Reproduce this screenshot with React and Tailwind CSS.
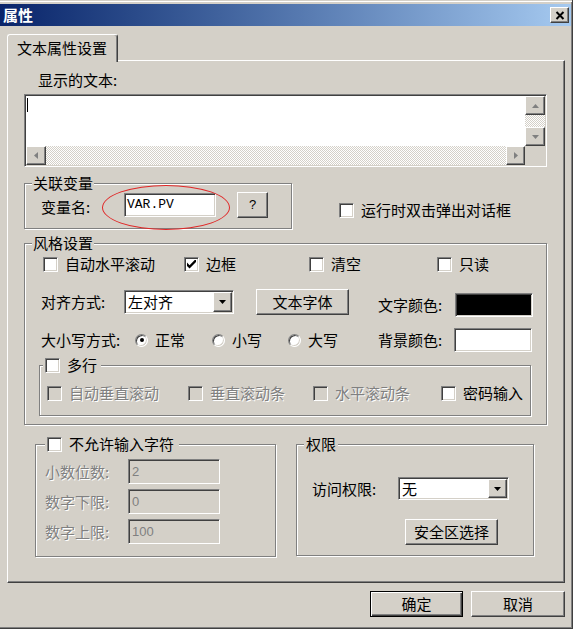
import React from "react";

const raised =
  "border border-t-white border-l-white border-r-[#404040] border-b-[#404040] shadow-[inset_-1px_-1px_0_#808080]";
const sunken =
  "border border-t-[#808080] border-l-[#808080] border-r-white border-b-white shadow-[inset_1px_1px_0_#404040,inset_-1px_-1px_0_#d4d0c8]";
const etched =
  "border border-[#808080] shadow-[1px_1px_0_#ffffff,inset_1px_1px_0_#ffffff]";
const disabledText = "text-[#808080] [text-shadow:1px_1px_0_#ffffff]";
const dither =
  "bg-[repeating-conic-gradient(#ffffff_0%_25%,#d4d0c8_0%_50%)] bg-size-[2px_2px]";

function Check({ checked = false, disabled = false }) {
  return (
    <span
      className={`${sunken} ${
        disabled ? "bg-[#d4d0c8]" : "bg-white"
      } flex h-[15px] w-[15px] shrink-0 items-center justify-center`}
    >
      {checked && (
        <svg width="9" height="9" viewBox="0 0 7 7">
          <polygon points="0,2 2,4 7,-1 7,1.6 2,6.6 0,4.6" fill="#000" />
        </svg>
      )}
    </span>
  );
}

function CheckItem({ label, checked, disabled, className = "" }) {
  return (
    <div className={`flex items-center gap-[7px] ${className}`}>
      <Check checked={checked} disabled={disabled} />
      <span className={disabled ? disabledText : ""}>{label}</span>
    </div>
  );
}

function Radio({ checked = false, label, className = "" }) {
  return (
    <div className={`flex items-center gap-[7px] ${className}`}>
      <span className="flex h-[13px] w-[13px] shrink-0 items-center justify-center rounded-full border border-t-[#808080] border-l-[#808080] border-r-white border-b-white bg-white shadow-[inset_1px_1px_0_#404040,inset_-1px_-1px_0_#d4d0c8]">
        {checked && <span className="h-[4px] w-[4px] rounded-full bg-black" />}
      </span>
      <span>{label}</span>
    </div>
  );
}

function Arrow({ dir, color = "#808080" }) {
  const paths = {
    up: "M0 4 L3.5 0 L7 4 Z",
    down: "M0 0 L7 0 L3.5 4 Z",
  };
  if (dir === "left" || dir === "right") {
    return (
      <svg width="4" height="7" viewBox="0 0 4 7">
        <path d={dir === "left" ? "M4 0 L0 3.5 L4 7 Z" : "M0 0 L4 3.5 L0 7 Z"} fill={color} />
      </svg>
    );
  }
  return (
    <svg width="7" height="4" viewBox="0 0 7 4">
      <path d={paths[dir]} fill={color} />
    </svg>
  );
}

function Select({ value, w, h }) {
  return (
    <div className={`${sunken} flex bg-white p-[1px] ${w} ${h}`}>
      <span className="flex flex-1 items-center pl-[2px]">{value}</span>
      <span className={`${raised} flex w-[19px] items-center justify-center bg-[#d4d0c8]`}>
        <Arrow dir="down" color="#000" />
      </span>
    </div>
  );
}

function Button({ children, className = "", isDefault = false }) {
  if (isDefault) {
    return (
      <div
        className={`flex items-center justify-center border border-black bg-[#d4d0c8] shadow-[inset_1px_1px_0_#ffffff,inset_-1px_-1px_0_#404040,inset_-2px_-2px_0_#808080] ${className}`}
      >
        {children}
      </div>
    );
  }
  return (
    <div className={`${raised} flex items-center justify-center bg-[#d4d0c8] ${className}`}>
      {children}
    </div>
  );
}

export default function App() {
  return (
    <div className="h-[632px] w-[577px] overflow-hidden bg-white font-['Noto_Sans_CJK_SC','Noto_Sans',sans-serif] text-[15px] leading-[16px] text-black">
      <div className="flex h-[629px] w-[573px] flex-col border-r border-b border-r-[#404040] border-b-[#404040] bg-[#d4d0c8] pt-[4px] pr-[1px] shadow-[inset_0_1px_0_#d4d0c8,inset_0_2px_0_#ffffff,inset_-1px_-1px_0_#808080]">
        {/* Title bar */}
        <div className="flex h-[22px] items-center justify-between bg-linear-to-r from-[#0a246a] to-[#a6caf0] pr-[2px] pl-[3px]">
          <span className="font-bold text-white">属性</span>
          <div className={`${raised} flex h-[16px] w-[19px] items-center justify-center bg-[#d4d0c8]`}>
            <svg width="10" height="9" viewBox="0 0 10 9">
              <path d="M1.5 1 L8.5 8 M8.5 1 L1.5 8" stroke="#000" strokeWidth="2" />
            </svg>
          </div>
        </div>

        {/* Tab */}
        <div className="mt-[8px] flex flex-col items-start pl-[7px]">
          <div className="relative z-10 -mb-[2px] h-[28px] w-[111px] rounded-t-[3px] border-t border-l border-r border-t-white border-l-white border-r-[#404040] bg-[#d4d0c8] pt-[5px] pl-[9px] shadow-[inset_-1px_0_0_#808080]">
            文本属性设置
          </div>

          {/* Panel */}
          <div className="flex h-[523px] w-[558px] flex-col items-start border border-t-white border-l-white border-r-[#404040] border-b-[#404040] pt-[11px] pl-[16px] shadow-[inset_-1px_-1px_0_#808080]">
            <div className="ml-[14px]">显示的文本:</div>

            {/* Textarea */}
            <div className={`${sunken} mt-[6px] grid h-[73px] w-[523px] grid-cols-[1fr_20px] grid-rows-[1fr_19px] bg-white p-[1px]`}>
              <div className="bg-white pt-[2px] pl-[1px]">
                <div className="h-[14px] w-px bg-black" />
              </div>
              <div className="flex flex-col">
                <div className={`${raised} flex h-[19px] items-center justify-center bg-[#d4d0c8]`}>
                  <Arrow dir="up" />
                </div>
                <div className={`h-[12px] ${dither}`} />
                <div className={`${raised} flex h-[19px] items-center justify-center bg-[#d4d0c8]`}>
                  <Arrow dir="down" />
                </div>
              </div>
              <div className="flex">
                <div className={`${raised} flex w-[20px] items-center justify-center bg-[#d4d0c8]`}>
                  <Arrow dir="left" />
                </div>
                <div className={`flex-1 ${dither}`} />
                <div className={`${raised} flex w-[19px] items-center justify-center bg-[#d4d0c8]`}>
                  <Arrow dir="right" />
                </div>
              </div>
              <div className="bg-[#d4d0c8]" />
            </div>

            {/* 关联变量 */}
            <div className="mt-[8px] flex items-start">
              <fieldset className={`${etched} h-[54px] w-[268px]`}>
                <legend className="ml-[7px] bg-[#d4d0c8] px-[1px]">关联变量</legend>
                <div className="mt-[2px] flex items-start pl-[16px]">
                  <span className="mt-[6px] w-[83px]">变量名:</span>
                  <div className="relative">
                    <div className={`${sunken} h-[24px] w-[92px] bg-white pt-[3px] pl-[2px] font-['Liberation_Mono',monospace] text-[13px]`}>
                      VAR.PV
                    </div>
                    <div className="pointer-events-none absolute -top-[8px] -left-[22px] h-[45px] w-[128px] rounded-[50%] border border-[#e02828]" />
                  </div>
                  <Button className="-mt-[1px] ml-[21px] h-[26px] w-[31px] font-['Liberation_Sans',sans-serif] text-[13px]">
                    ?
                  </Button>
                </div>
              </fieldset>
              <CheckItem className="mt-[27px] ml-[47px]" label="运行时双击弹出对话框" />
            </div>

            {/* 风格设置 */}
            <fieldset className={`${etched} mt-[6px] h-[190px] w-[523px]`}>
              <legend className="ml-[7px] bg-[#d4d0c8] px-[1px]">风格设置</legend>
              <div className="flex flex-col items-start pl-[14px]">
                <div className="mt-[5px] ml-[4px] flex h-[16px] items-center">
                  <CheckItem className="w-[141px]" label="自动水平滚动" />
                  <CheckItem className="w-[125px]" label="边框" checked />
                  <CheckItem className="w-[128px]" label="清空" />
                  <CheckItem label="只读" />
                </div>

                <div className="mt-[17px] ml-[2px] flex h-[26px] items-center">
                  <span className="w-[83px]">对齐方式:</span>
                  <Select value="左对齐" w="w-[110px]" h="h-[24px]" />
                  <Button className="ml-[22px] h-[26px] w-[93px]">文本字体</Button>
                  <span className="mt-[6px] ml-[29px] w-[77px]">文字颜色:</span>
                  <div className={`${sunken} mt-[6px] h-[24px] w-[78px] bg-black`} />
                </div>

                <div className="mt-[13px] ml-[2px] flex h-[24px] items-center">
                  <span className="w-[94px]">大小写方式:</span>
                  <Radio className="w-[77px]" label="正常" checked />
                  <Radio className="w-[76px]" label="小写" />
                  <Radio className="w-[90px]" label="大写" />
                  <span className="w-[76px]">背景颜色:</span>
                  <div className={`${sunken} h-[24px] w-[78px] bg-white`} />
                </div>

                <fieldset className={`${etched} mt-[5px] h-[59px] w-[492px]`}>
                  <legend className="ml-[3px] bg-[#d4d0c8] px-[2px]">
                    <span className="flex items-center gap-[7px] pr-[2px]">
                      <Check />
                      <span>多行</span>
                    </span>
                  </legend>
                  <div className="mt-[12px] flex h-[16px] items-center pl-[7px]">
                    <CheckItem className="w-[141px]" label="自动垂直滚动" disabled />
                    <CheckItem className="w-[125px]" label="垂直滚动条" disabled />
                    <CheckItem className="w-[128px]" label="水平滚动条" disabled />
                    <CheckItem label="密码输入" />
                  </div>
                </fieldset>
              </div>
            </fieldset>

            {/* Bottom groups */}
            <div className="mt-[11px] ml-[11px] flex items-start gap-[20px]">
              <fieldset className={`${etched} h-[121px] w-[241px]`}>
                <legend className="ml-[9px] bg-[#d4d0c8] px-[2px]">
                  <span className="flex items-center gap-[7px] pr-[3px]">
                    <Check />
                    <span>不允许输入字符</span>
                  </span>
                </legend>
                <div className="mt-[7px] flex flex-col gap-[5px] pl-[9px]">
                  {[
                    ["小数位数:", "2"],
                    ["数字下限:", "0"],
                    ["数字上限:", "100"],
                  ].map(([l, v]) => (
                    <div key={l} className="flex h-[25px] items-center">
                      <span className={`w-[83px] ${disabledText}`}>{l}</span>
                      <div className={`${sunken} flex h-[25px] w-[92px] items-center bg-[#d4d0c8] pl-[3px] font-['Liberation_Sans',sans-serif] text-[13px] text-[#808080]`}>
                        {v}
                      </div>
                    </div>
                  ))}
                </div>
              </fieldset>

              <fieldset className={`${etched} h-[120px] w-[238px]`}>
                <legend className="ml-[7px] bg-[#d4d0c8] px-[2px]">权限</legend>
                <div className="mt-[25px] flex flex-col items-start pl-[15px]">
                  <div className="flex h-[23px] items-center">
                    <span className="w-[86px]">访问权限:</span>
                    <Select value="无" w="w-[111px]" h="h-[23px]" />
                  </div>
                  <Button className="mt-[19px] ml-[93px] h-[26px] w-[93px]">安全区选择</Button>
                </div>
              </fieldset>
            </div>
          </div>
        </div>

        {/* Dialog buttons */}
        <div className="mt-[8px] flex justify-end gap-[8px] pr-[6px]">
          <Button isDefault className="h-[26px] w-[93px]">确定</Button>
          <Button className="h-[26px] w-[94px]">取消</Button>
        </div>
      </div>
    </div>
  );
}
